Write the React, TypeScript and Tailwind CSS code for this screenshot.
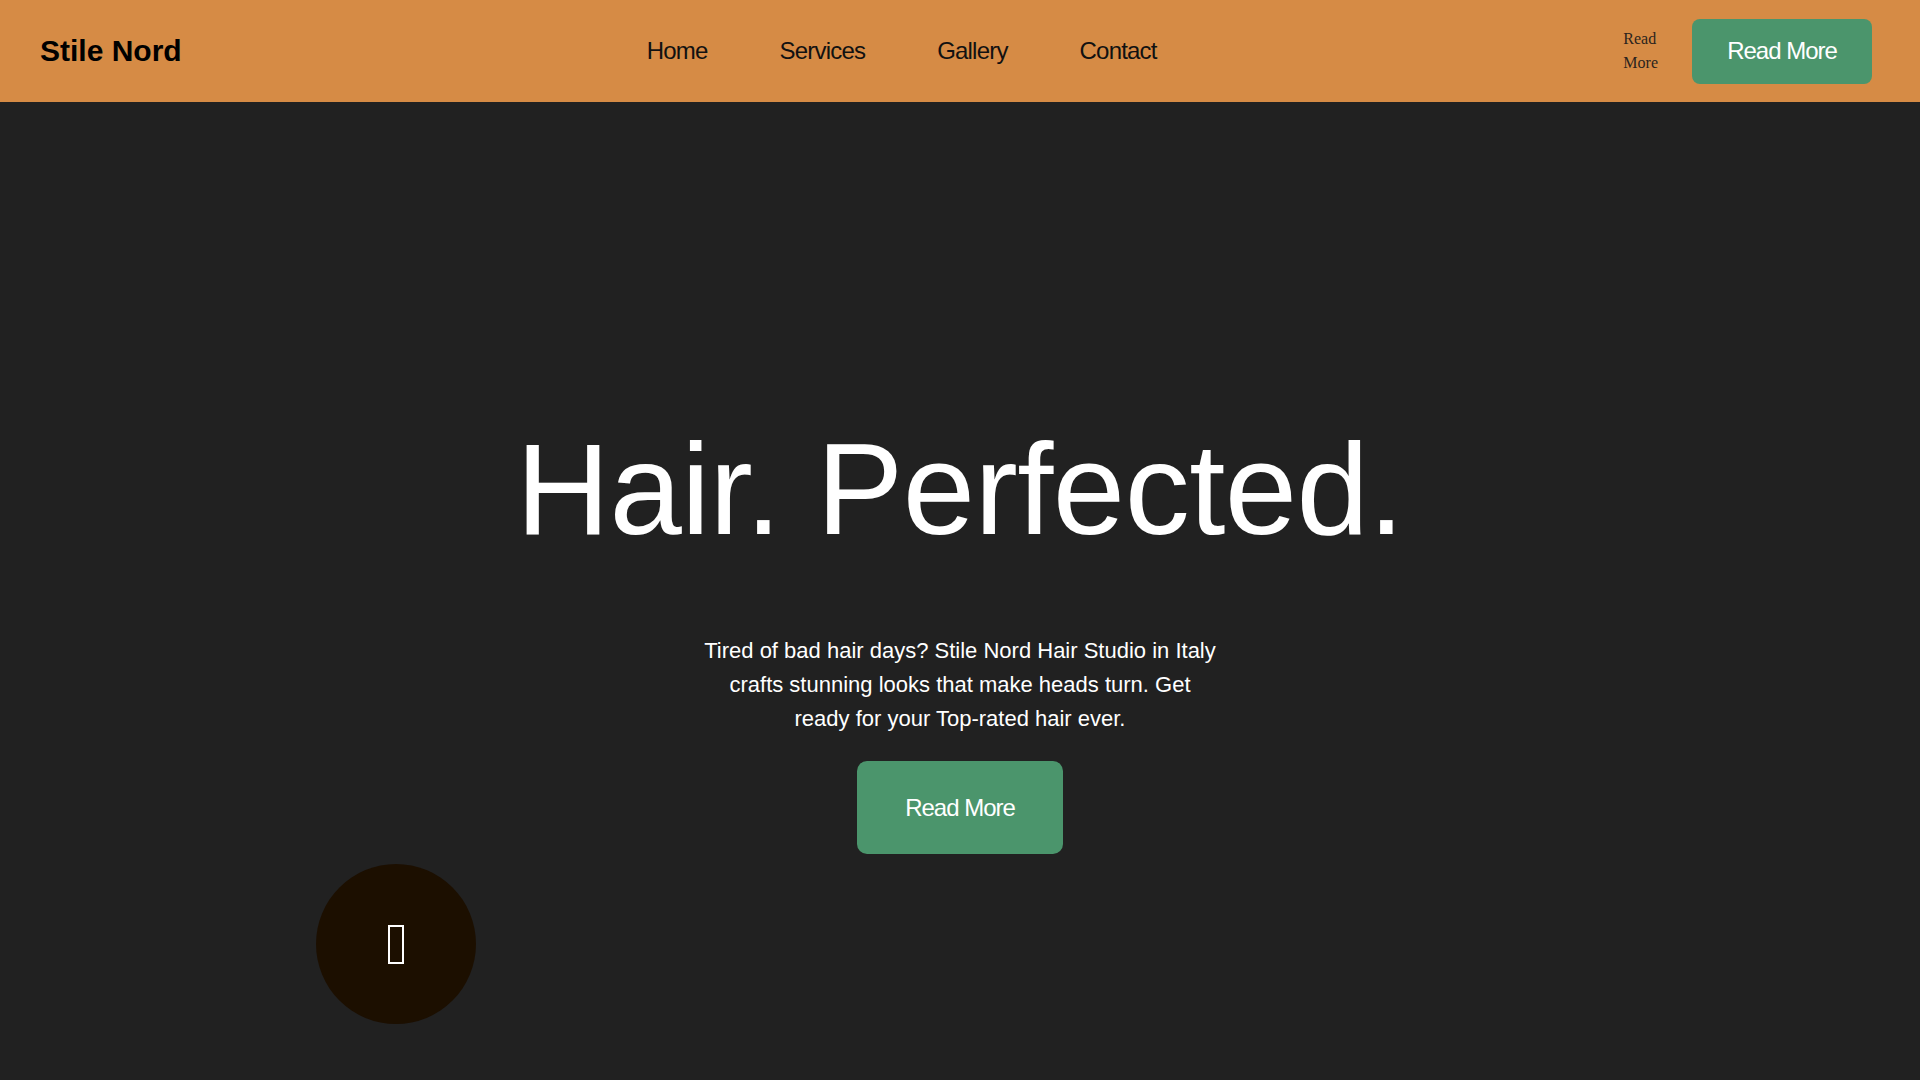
import React from "react";

export default function App() {
  return (
    <div className="min-h-screen w-full bg-[#212121] font-['Liberation_Sans',Arial,sans-serif]">
      <header className="flex h-[102px] items-center bg-[#d68b45] pl-[40px] pr-[48px]">
        <div className="text-[30px] font-bold leading-none text-black">Stile Nord</div>
        <nav className="ml-[465px] flex items-center gap-[72px] text-[24px] leading-none tracking-[-0.8px] text-[#111]">
          <a href="#" className="block">Home</a>
          <a href="#" className="block">Services</a>
          <a href="#" className="block">Gallery</a>
          <a href="#" className="block">Contact</a>
        </nav>
        <div className="ml-auto flex items-center">
          <div className="font-['Liberation_Serif','Times_New_Roman',serif] text-[16px] leading-[24px] text-[#2b241d]">
            Read
            <br />
            More
          </div>
          <button className="ml-[34px] flex h-[65px] w-[180px] items-center justify-center rounded-[8px] bg-[#4b956c] text-[24px] leading-none tracking-[-1px] text-white">
            Read More
          </button>
        </div>
      </header>
      <main className="relative flex h-[978px] flex-col items-center pt-[322px]">
        <h1 className="text-[130px] font-normal leading-none tracking-[-0.5px] text-white">Hair. Perfected.</h1>
        <p className="mt-[80px] text-center text-[22px] leading-[34px] text-white">
          Tired of bad hair days? Stile Nord Hair Studio in Italy
          <br />
          crafts stunning looks that make heads turn. Get
          <br />
          ready for your Top-rated hair ever.
        </p>
        <button className="mt-[25px] flex h-[93px] w-[206px] items-center justify-center rounded-[10px] bg-[#4b956c] text-[24px] leading-none tracking-[-1px] text-white">
          Read More
        </button>
        <div className="absolute left-[316px] top-[762px] flex h-[160px] w-[160px] items-center justify-center rounded-full bg-[#1c0f00]">
          <div className="h-[39px] w-[16px] border-2 border-white" />
        </div>
      </main>
    </div>
  );
}
